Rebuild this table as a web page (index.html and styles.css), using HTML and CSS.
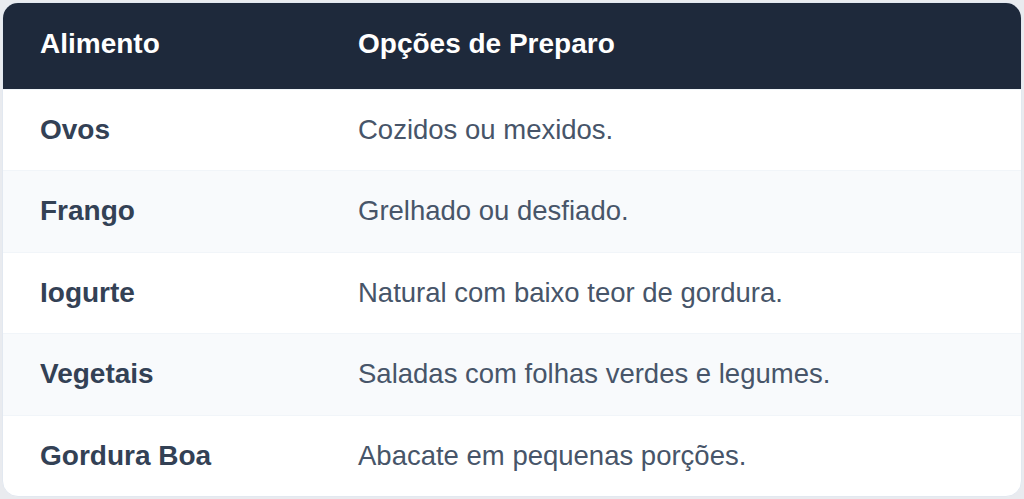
FILE: index.html
```html
<!DOCTYPE html>
<html lang="pt">
<head>
<meta charset="utf-8">
<title>Alimentos</title>
<link rel="stylesheet" href="styles.css">
</head>
<body>
<div class="card">
  <table class="food-table">
    <thead>
      <tr>
        <th class="col-food">Alimento</th>
        <th>Opções de Preparo</th>
      </tr>
    </thead>
    <tbody>
      <tr><td class="col-food">Ovos</td><td>Cozidos ou mexidos.</td></tr>
      <tr><td class="col-food">Frango</td><td>Grelhado ou desfiado.</td></tr>
      <tr><td class="col-food">Iogurte</td><td>Natural com baixo teor de gordura.</td></tr>
      <tr><td class="col-food">Vegetais</td><td>Saladas com folhas verdes e legumes.</td></tr>
      <tr><td class="col-food">Gordura Boa</td><td>Abacate em pequenas porções.</td></tr>
    </tbody>
  </table>
</div>
</body>
</html>
```

FILE: styles.css
```css
html, body {
  margin: 0;
  padding: 0;
}
body {
  background: #e9ebef;
  padding: 2px 2px 2px 2px;
  font-family: "Liberation Sans", Arial, Helvetica, sans-serif;
}
.card {
  background: #ffffff;
  border: 1px solid #e2e8f0;
  border-radius: 16px;
  overflow: hidden;
  height: 495px;
  box-sizing: border-box;
}
.food-table {
  width: 100%;
  border-collapse: collapse;
  table-layout: fixed;
}
.food-table th,
.food-table td {
  text-align: left;
  padding: 0 0 0 37px;
  vertical-align: middle;
}
.food-table .col-food {
  width: 281px;
}
.food-table thead tr {
  background: #1e293b;
  height: 86px;
}
.food-table th {
  color: #ffffff;
  font-weight: 700;
  font-size: 28px;
  padding-bottom: 3px;
}
.food-table tbody tr {
  height: 81.5px;
  border-top: 1px solid #f1f5f9;
}
.food-table tbody tr:nth-child(even) {
  background: #f8fafc;
}
.food-table td {
  font-size: 27.5px;
  color: #475569;
}
.food-table td.col-food {
  font-size: 28px;
  font-weight: 700;
  color: #334155;
}
```
